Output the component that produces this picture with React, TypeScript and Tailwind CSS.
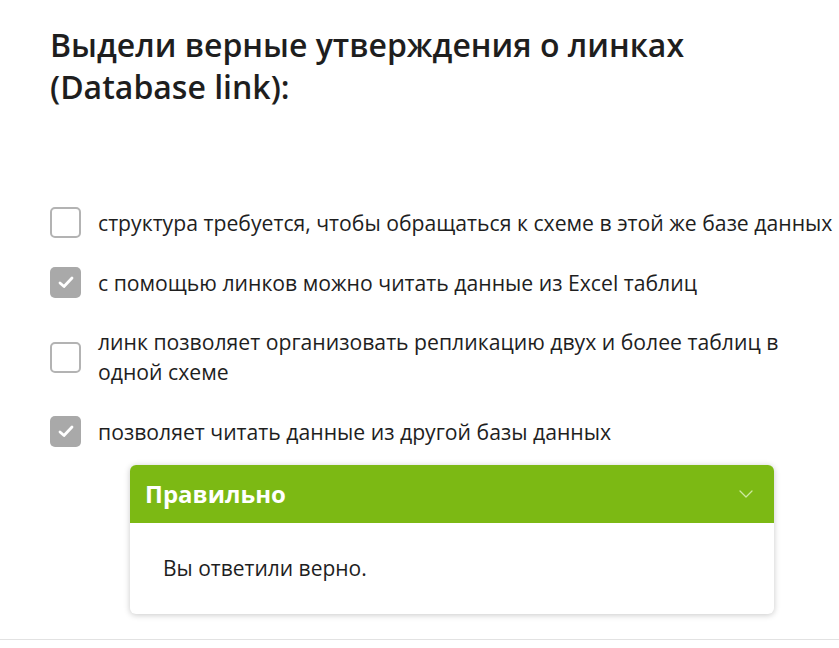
import { ChevronDown } from "lucide-react";

const options = [
  { text: "структура требуется, чтобы обращаться к схеме в этой же базе данных", checked: false },
  { text: "с помощью линков можно читать данные из Excel таблиц", checked: true },
  { text: "линк позволяет организовать репликацию двух и более таблиц в одной схеме", checked: false },
  { text: "позволяет читать данные из другой базы данных", checked: true },
];

function Checkbox({ checked }: { checked: boolean }) {
  if (checked) {
    return (
      <div className="w-[31px] h-[31px] shrink-0 rounded-[5px] bg-[#a9a9a9] flex items-center justify-center">
        <svg width="16" height="13" viewBox="0 0 16 13" fill="none">
          <path d="M2 7 L6 10.5 L14 2" stroke="white" strokeWidth="2.8" strokeLinecap="round" strokeLinejoin="round" />
        </svg>
      </div>
    );
  }
  return <div className="w-[31px] h-[31px] shrink-0 rounded-[5px] border-2 border-[#b3b3b3] bg-white" />;
}

export default function App() {
  return (
    <div className="min-h-screen bg-white font-['Open_Sans',sans-serif] text-[#1e1e1e] overflow-hidden">
      <div className="pl-[50px] pt-[24px]">
        <h1 className="text-[32px] leading-[42px] font-semibold w-[700px]">
          Выдели верные утверждения о линках (Database link):
        </h1>

        <div className="mt-[99px] flex flex-col gap-[29px]">
          {options.map((o) => (
            <div key={o.text} className="flex items-center gap-[17px]">
              <Checkbox checked={o.checked} />
              <span className="text-[21.2px] leading-[30px] w-[745px] shrink-0">{o.text}</span>
            </div>
          ))}
        </div>

        <div className="ml-[80px] mt-[18px] w-[644px] rounded-[6px] bg-white shadow-[0_1px_6px_rgba(0,0,0,0.22)] overflow-hidden">
          <div className="h-[58px] bg-[#7cb914] flex items-center justify-between pl-[15px] pr-[16px]">
            <span className="text-white font-bold text-[24px]">Правильно</span>
            <ChevronDown className="w-[24px] h-[24px] text-[#cde9a0]" strokeWidth={1.25} />
          </div>
          <div className="h-[91px] flex items-center pl-[33px] text-[21px]">Вы ответили верно.</div>
        </div>
      </div>
      <div className="mt-[25px] border-t border-[#e2e2e2]" />
    </div>
  );
}
